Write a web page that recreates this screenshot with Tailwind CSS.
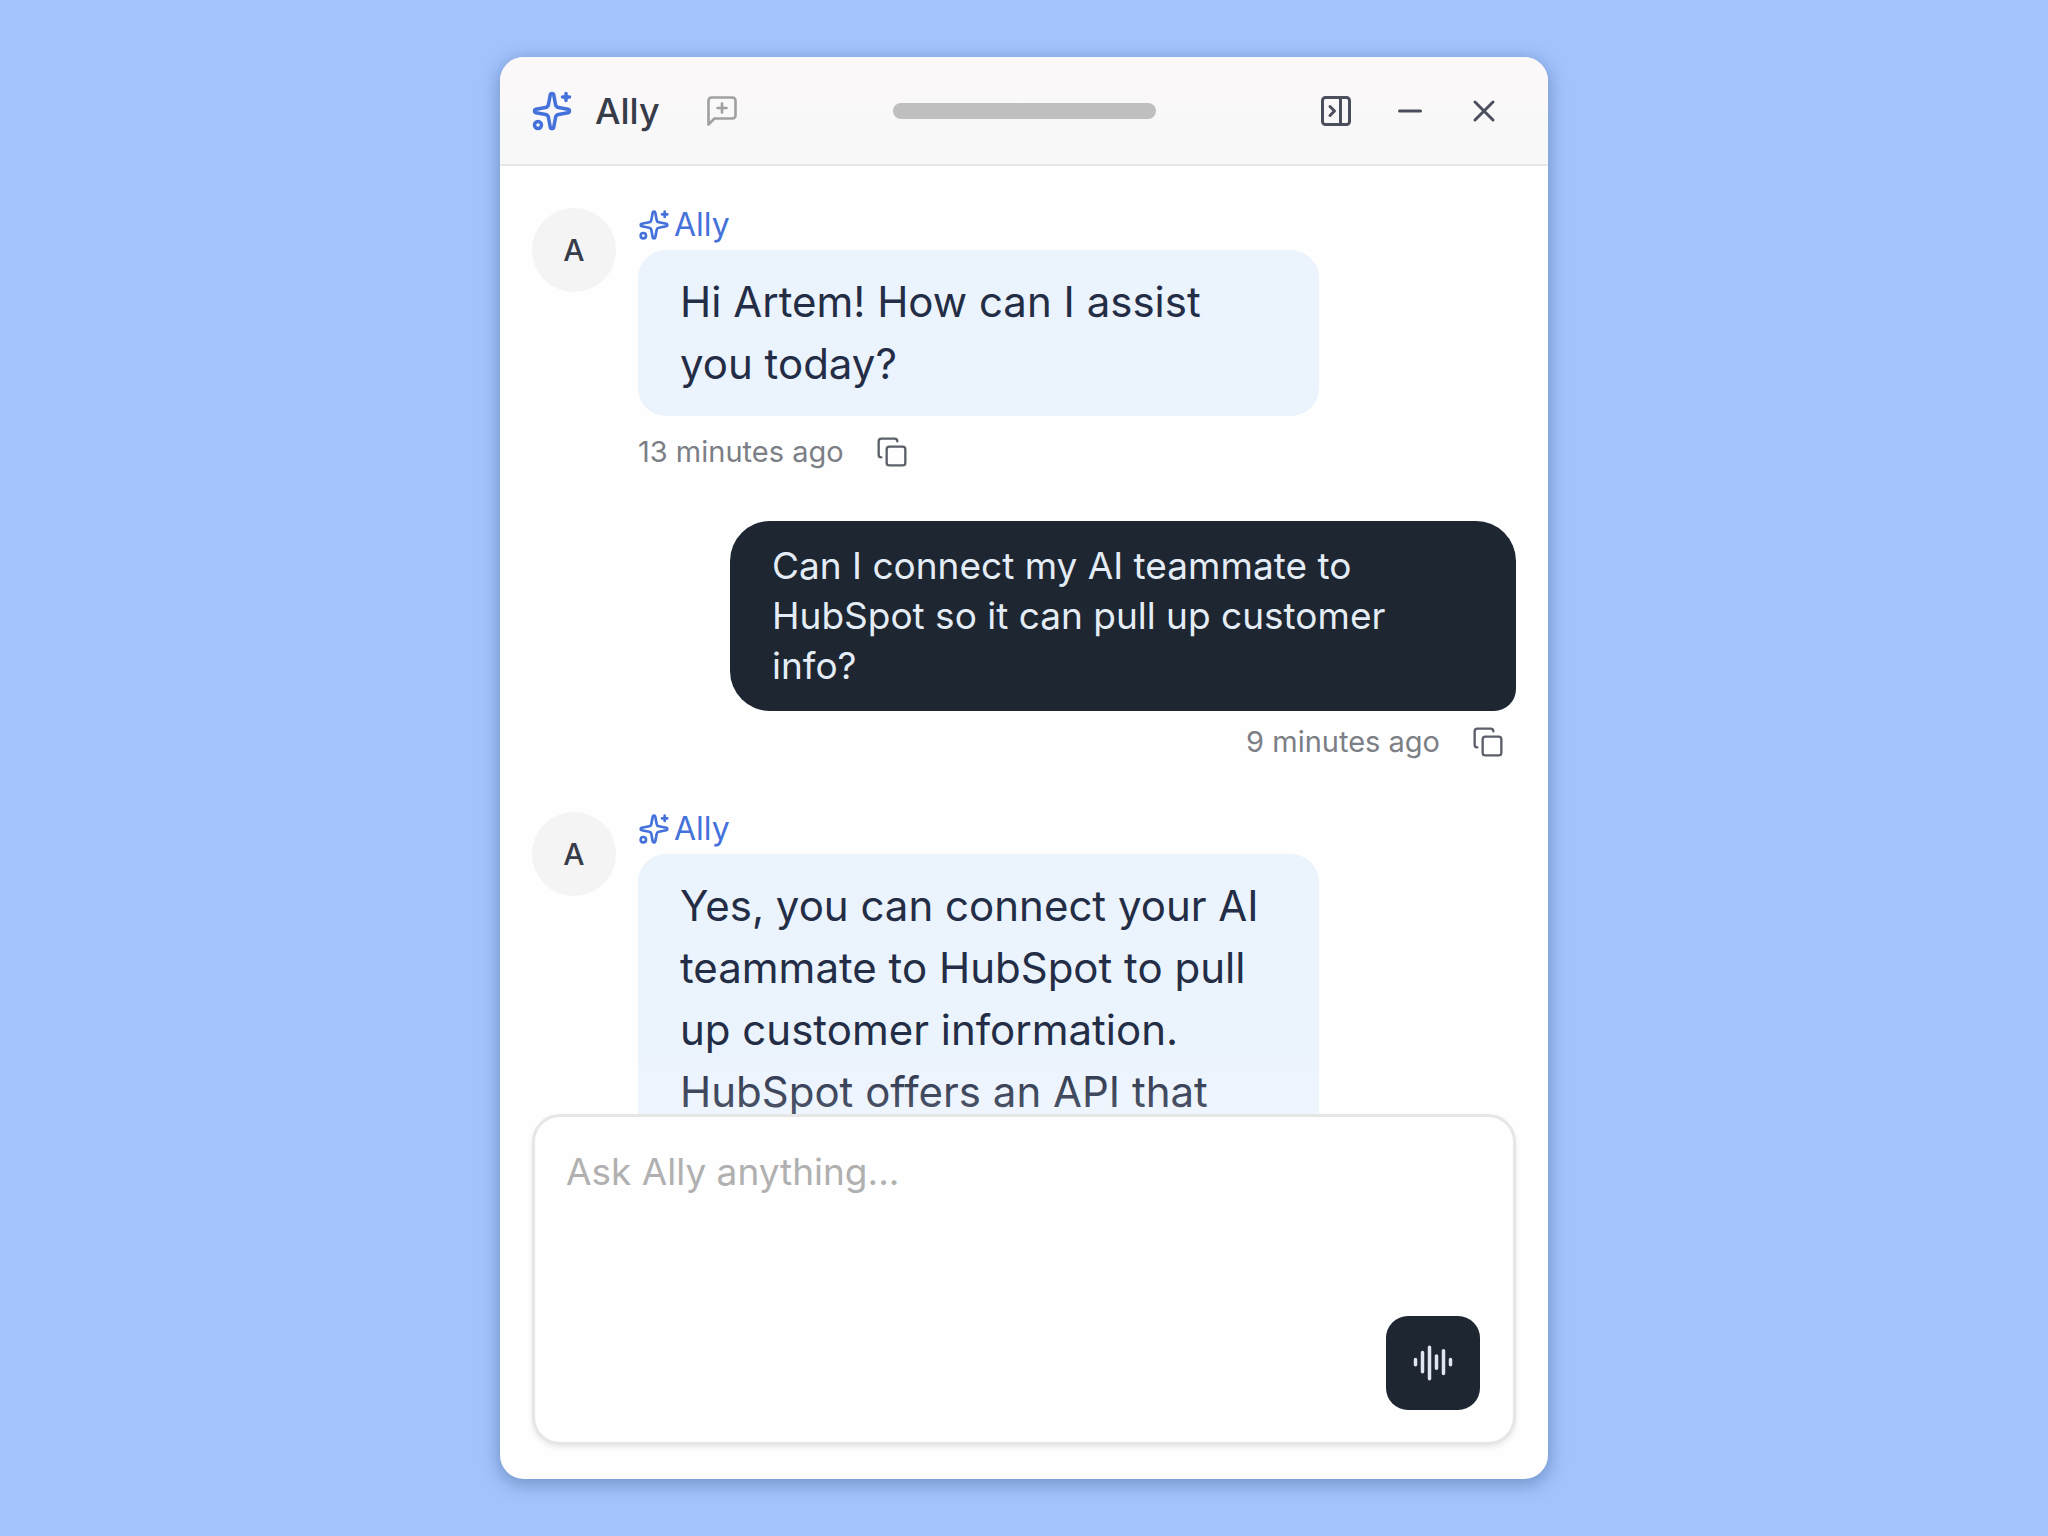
<!DOCTYPE html>
<html lang="en">
<head>
<meta charset="utf-8">
<meta name="viewport" content="width=device-width, initial-scale=1">
<title>Ally</title>
<script src="https://cdn.jsdelivr.net/npm/@tailwindcss/browser@4"></script>
</head>
<body class="flex h-screen justify-center bg-[#a2c3fd] py-[57px] font-['Inter','Liberation_Sans',sans-serif] [font-optical-sizing:none]">

<!-- Shared icon shapes -->
<svg class="hidden" aria-hidden="true">
  <symbol id="sparkles" viewBox="0 0 24 24" fill="none" stroke="currentColor" stroke-width="2" stroke-linecap="round" stroke-linejoin="round">
    <path d="M11.017 2.814a1 1 0 0 1 1.966 0l1.051 5.558a2 2 0 0 0 1.594 1.594l5.558 1.051a1 1 0 0 1 0 1.966l-5.558 1.051a2 2 0 0 0-1.594 1.594l-1.051 5.558a1 1 0 0 1-1.966 0l-1.051-5.558a2 2 0 0 0-1.594-1.594l-5.558-1.051a1 1 0 0 1 0-1.966l5.558-1.051a2 2 0 0 0 1.594-1.594z"/>
    <path d="M20 2v4M22 4h-4"/><circle cx="4" cy="20" r="2"/>
  </symbol>
  <symbol id="copy" viewBox="0 0 24 24" fill="none" stroke="currentColor" stroke-width="1.75" stroke-linecap="round" stroke-linejoin="round">
    <rect x="8" y="8" width="14" height="14" rx="2"/>
    <path d="M4 16c-1.1 0-2-.9-2-2V4c0-1.1.9-2 2-2h10c1.1 0 2 .9 2 2"/>
  </symbol>
</svg>

<main class="flex w-full max-w-[1048px] flex-col overflow-hidden rounded-[24px] bg-[#fefefe] shadow-[0_4px_16px_3px_rgba(60,90,140,0.4)]">

  <header class="grid h-[109px] shrink-0 grid-cols-[1fr_auto_1fr] items-center border-b-2 border-[#e6e6e6] bg-linear-to-b from-[#fbf8fa] to-[#f8f8f8] px-[31px]">
    <div class="flex items-center">
      <svg class="size-[42px] text-[#4471da]"><use href="#sparkles"/></svg>
      <h1 class="ml-[22px] text-[36px] leading-[48px] font-medium text-[#363c49]">Ally</h1>
      <button type="button" aria-label="New chat" class="ml-11 text-[#a0a0a2]">
        <svg class="size-9" viewBox="0 0 24 24" fill="none" stroke="currentColor" stroke-width="1.75" stroke-linecap="round" stroke-linejoin="round"><path d="M21 15a2 2 0 0 1-2 2H7l-4 4V5a2 2 0 0 1 2-2h14a2 2 0 0 1 2 2z"/><path d="M12 7v6M9 10h6"/></svg>
      </button>
    </div>
    <div class="h-4 w-[263px] rounded-full bg-[#c0bfc0]"></div>
    <div class="flex items-center justify-end gap-[38px] pr-[15px] text-[#4b4f5c]">
      <button type="button" aria-label="Dock to side">
        <svg class="size-9" viewBox="0 0 24 24" fill="none" stroke="currentColor" stroke-width="2" stroke-linecap="round" stroke-linejoin="round"><rect x="3" y="3" width="18" height="18" rx="2"/><path d="M15 3v18M8 9l3 3-3 3"/></svg>
      </button>
      <button type="button" aria-label="Minimize">
        <svg class="size-9" viewBox="0 0 24 24" fill="none" stroke="currentColor" stroke-width="2" stroke-linecap="round"><path d="M5 12h14"/></svg>
      </button>
      <button type="button" aria-label="Close">
        <svg class="size-9" viewBox="0 0 24 24" fill="none" stroke="currentColor" stroke-width="2" stroke-linecap="round"><path d="M18 6 6 18M6 6l12 12"/></svg>
      </button>
    </div>
  </header>

  <div class="relative min-h-0 flex-1 overflow-hidden px-8 pt-[34px]">
    <article class="flex gap-[22px]">
      <div class="mt-2 flex size-[84px] shrink-0 items-center justify-center rounded-full bg-[#f4f4f4] text-[30px] font-medium text-[#363c49]">A</div>
      <div class="w-full max-w-[681px]">
        <h2 class="flex h-[50px] items-center gap-1 text-[32px] text-[#4471da]"><svg class="size-8"><use href="#sparkles"/></svg>Ally</h2>
        <p class="rounded-[28px] bg-[#ebf3fd] px-[42px] pt-[21px] pb-[21px] text-[42px] leading-[62px] text-[#232d45]">Hi Artem! How can I assist<br>you today?</p>
        <div class="mt-[18px] flex h-9 items-center gap-8 text-[29px] text-[#7c7f85]"><time>13 minutes ago</time><button type="button" aria-label="Copy message" class="text-[#5b5f6a]"><svg class="size-8"><use href="#copy"/></svg></button></div>
      </div>
    </article>

    <article class="mt-[51px] flex flex-col items-end">
      <p class="w-full max-w-[786px] rounded-[40px] rounded-br-[22px] bg-[#1d2631] px-[42px] py-5 text-[37px] leading-[50px] text-[#e4ecf6]">Can I connect my AI teammate to<br>HubSpot so it can pull up customer<br>info?</p>
      <div class="mt-[13px] flex h-9 items-center gap-8 pr-3 text-[29px] text-[#7c7f85]"><time>9 minutes ago</time><button type="button" aria-label="Copy message" class="text-[#5b5f6a]"><svg class="size-8"><use href="#copy"/></svg></button></div>
    </article>

    <article class="mt-11 flex gap-[22px]">
      <div class="mt-2 flex size-[84px] shrink-0 items-center justify-center rounded-full bg-[#f4f4f4] text-[30px] font-medium text-[#363c49]">A</div>
      <div class="w-full max-w-[681px]">
        <h2 class="flex h-[50px] items-center gap-1 text-[32px] text-[#4471da]"><svg class="size-8"><use href="#sparkles"/></svg>Ally</h2>
        <p class="rounded-t-[28px] bg-[#ebf3fd] px-[42px] pt-[21px] text-[42px] leading-[62px] text-[#232d45]">Yes, you can connect your AI<br>teammate to HubSpot to pull<br>up customer information.<br>HubSpot offers an API that</p>
      </div>
    </article>

    <!-- Fades messages out above the composer -->
    <div class="pointer-events-none absolute inset-x-0 bottom-0 h-16 bg-linear-to-b from-white/0 to-white/20"></div>
  </div>

  <form class="mx-8 mb-[34px] flex h-[331px] shrink-0 flex-col rounded-[28px] border-3 border-[#e6e6e6] bg-[#fefefe] pt-[30px] pr-[33px] pb-8 pl-[31px] shadow-[0_3px_5px_rgba(0,0,0,0.08)]">
    <textarea aria-label="Message Ally" placeholder="Ask Ally anything..." class="block w-full flex-1 resize-none bg-transparent text-[37px] leading-[50px] text-[#232d45] outline-none placeholder:text-[#b0b0b0]"></textarea>
    <button type="button" aria-label="Voice input" class="flex size-[94px] shrink-0 items-center justify-center self-end rounded-[22px] bg-[#1d2631] text-[#dfe6f2]">
      <svg class="size-[42px]" viewBox="0 0 24 24" fill="none" stroke="currentColor" stroke-width="2" stroke-linecap="round"><path d="M2 10v3M6 6v11M10 3v18M14 8v7M18 5v13M22 10v3"/></svg>
    </button>
  </form>
</main>
</body>
</html>
